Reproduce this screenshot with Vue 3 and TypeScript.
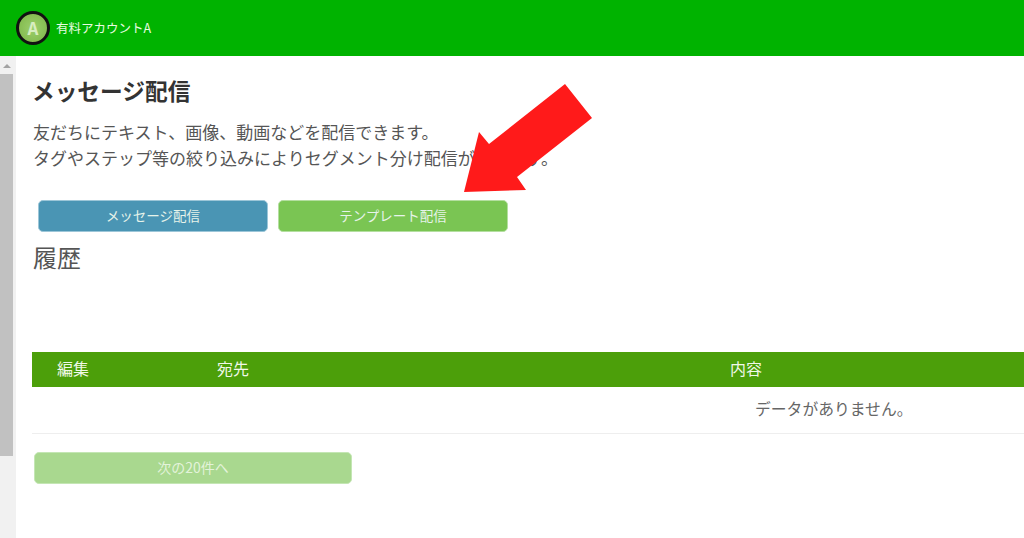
<script setup lang="ts">
const columns = ["編集", "宛先", "内容"];
</script>

<template>
  <div class="page">
    <header class="topbar">
      <div class="avatar">A</div>
      <span class="accountName">有料アカウントA</span>
    </header>

    <div class="body">
      <aside class="scrollbar">
        <span class="scrollUp"></span>
        <div class="scrollThumb"></div>
      </aside>

      <main class="content">
        <h1 class="title">メッセージ配信</h1>
        <p class="lead">
          友だちにテキスト、画像、動画などを配信できます。<br />
          タグやステップ等の絞り込みによりセグメント分け配信が可能です。
        </p>

        <div class="actions">
          <button class="btn blue">メッセージ配信</button>
          <button class="btn green">テンプレート配信</button>
        </div>

        <h2 class="history">履歴</h2>

        <div class="table">
          <div class="tableHead">
            <span v-for="col in columns" :key="col">{{ col }}</span>
          </div>
          <div class="emptyRow">データがありません。</div>
        </div>

        <button class="btn next">次の20件へ</button>
      </main>

      <svg class="arrow" width="140" height="120" viewBox="0 0 140 120">
        <polygon points="4,112 19,52 29,64 105,4 132,38 57,97 66,110" fill="#ff1a1a" />
      </svg>
    </div>
  </div>
</template>

<style>
html,
body {
  margin: 0;
  overflow: hidden;
  background: #fff;
}
</style>

<style scoped>
.page {
  width: 1024px;
  height: 538px;
  overflow: hidden;
  font-family: "Noto Sans CJK JP", "Noto Sans", sans-serif;
  color: #555;
}

.topbar {
  height: 56px;
  background: #00b300;
  display: flex;
  align-items: center;
  padding-left: 16px;
  gap: 6px;
  box-sizing: border-box;
  padding-bottom: 1px;
}

.avatar {
  width: 34px;
  height: 34px;
  box-sizing: border-box;
  border: 3px solid #111;
  border-radius: 50%;
  background: radial-gradient(circle, #9ccf6c 0%, #86bd52 70%, #6fa640 100%);
  color: #d8edc0;
  font-size: 17px;
  font-weight: 700;
  display: flex;
  align-items: center;
  justify-content: center;
}

.accountName {
  font-size: 12.5px;
  color: #e8fbe0;
}

.body {
  position: relative;
  display: flex;
  height: 482px;
}

.scrollbar {
  width: 16px;
  flex: none;
  background: #f1f1f1;
}

.scrollUp {
  display: block;
  width: 0;
  height: 0;
  margin: 8px 0 0 3px;
  border-left: 4px solid transparent;
  border-right: 4px solid transparent;
  border-bottom: 4px solid #a3a3a3;
}

.scrollThumb {
  width: 13px;
  height: 382px;
  margin-top: 6px;
  background: #c1c1c1;
}

.content {
  flex: 1;
  min-width: 0;
  padding: 19px 0 0 16px;
}

.title {
  margin: 0;
  font-size: 22.7px;
  line-height: 32px;
  font-weight: 700;
  color: #333;
}

.lead {
  margin: 12px 0 0 1px;
  font-size: 17px;
  line-height: 26px;
  white-space: nowrap;
}

.actions {
  display: flex;
  gap: 10px;
  margin: 29px 0 0 6px;
}

.btn {
  height: 32px;
  width: 230px;
  padding: 0 0 3px;
  border: 1px solid transparent;
  border-radius: 5px;
  font-family: inherit;
  font-size: 13.5px;
  color: #e6f3ea;
}

.blue {
  background: #4a95b4;
  border-color: #9cc6d8;
}

.green {
  background: #7ac553;
  border-color: #b4dfa0;
}

.history {
  margin: 8px 0 0 1px;
  font-size: 24px;
  line-height: 34px;
  font-weight: 400;
}

.table {
  margin-top: 78px;
}

.tableHead {
  height: 35px;
  box-sizing: border-box;
  padding: 0 0 3px 25px;
  background: #4c9f0a;
  color: #f0f8e8;
  font-size: 16px;
  display: grid;
  grid-template-columns: 160px 513px 1fr;
  align-items: center;
}

.emptyRow {
  height: 47px;
  box-sizing: border-box;
  border-bottom: 1px solid #eee;
  font-size: 15.8px;
  line-height: 44px;
  padding-left: 723px;
  color: #666;
}

.next {
  display: block;
  width: 318px;
  height: 32px;
  margin: 18px 0 0 2px;
  font-size: 14px;
  background: #a9d88f;
  border-color: #c4e6b4;
  color: #e3f3da;
}

.arrow {
  position: absolute;
  left: 460px;
  top: 24px;
}
</style>
